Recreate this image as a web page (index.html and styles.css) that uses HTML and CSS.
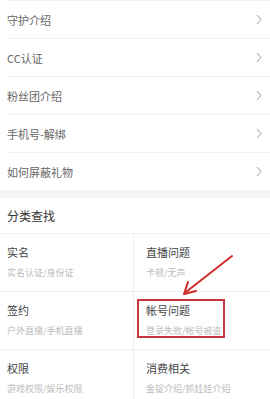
FILE: index.html
```html
<!DOCTYPE html>
<html lang="zh">
<head>
<meta charset="utf-8">
<link rel="stylesheet" href="styles.css">
</head>
<body>
<div class="page">
  <ul class="list">
    <li class="item"><span>守护介绍</span><svg class="chev" width="6" height="11" viewBox="0 0 6 11"><polyline points="1,1 5,5.5 1,10" fill="none" stroke="#9a9a9a" stroke-width="1"/></svg></li>
    <li class="item"><span>CC认证</span><svg class="chev" width="6" height="11" viewBox="0 0 6 11"><polyline points="1,1 5,5.5 1,10" fill="none" stroke="#9a9a9a" stroke-width="1"/></svg></li>
    <li class="item"><span>粉丝团介绍</span><svg class="chev" width="6" height="11" viewBox="0 0 6 11"><polyline points="1,1 5,5.5 1,10" fill="none" stroke="#9a9a9a" stroke-width="1"/></svg></li>
    <li class="item"><span>手机号-解绑</span><svg class="chev" width="6" height="11" viewBox="0 0 6 11"><polyline points="1,1 5,5.5 1,10" fill="none" stroke="#9a9a9a" stroke-width="1"/></svg></li>
    <li class="item"><span>如何屏蔽礼物</span><svg class="chev" width="6" height="11" viewBox="0 0 6 11"><polyline points="1,1 5,5.5 1,10" fill="none" stroke="#9a9a9a" stroke-width="1"/></svg></li>
  </ul>
  <div class="band"></div>
  <h2 class="heading">分类查找</h2>
  <div class="grid">
    <div class="cell left"><div class="title">实名</div><div class="sub">实名认证/身份证</div></div>
    <div class="cell right"><div class="title">直播问题</div><div class="sub">卡顿/无声</div></div>
    <div class="cell left"><div class="title">签约</div><div class="sub">户外直播/手机直播</div></div>
    <div class="cell right"><div class="title">帐号问题</div><div class="sub">登录失败/帐号被盗</div></div>
    <div class="cell left"><div class="title">权限</div><div class="sub">游戏权限/娱乐权限</div></div>
    <div class="cell right"><div class="title">消费相关</div><div class="sub">金锭介绍/抓娃娃介绍</div></div>
  </div>
  <div class="highlight"></div>
  <svg class="arrow" width="270" height="399" viewBox="0 0 270 399">
    <line x1="232" y1="256" x2="186" y2="292" stroke="#d42a2a" stroke-width="2" stroke-linecap="round"/>
    <polyline points="188,282 184,294 196,291" fill="none" stroke="#d42a2a" stroke-width="2" stroke-linecap="round" stroke-linejoin="round"/>
  </svg>
</div>
</body>
</html>
```

FILE: styles.css
```css
html, body {
  margin: 0;
  padding: 0;
  background: #fff;
}
body {
  font-family: "Noto Sans CJK SC", "Noto Sans", sans-serif;
  width: 270px;
  height: 399px;
  overflow: hidden;
}
.page {
  position: relative;
  width: 270px;
  height: 399px;
  overflow: hidden;
}
.list {
  list-style: none;
  margin: 0;
  padding: 0;
}
.item {
  height: 37px;
  margin-left: 6px;
  padding-right: 8px;
  border-top: 1px solid #f2f2f2;
  display: flex;
  align-items: center;
  justify-content: space-between;
  font-size: 11px;
  color: #666;
}
.item span {
  padding-left: 1px;
}
.chev {
  display: block;
}
.band {
  height: 8px;
  background: #f5f5f5;
}
.heading {
  margin: 0;
  height: 35px;
  line-height: 35px;
  padding-left: 7px;
  font-size: 12px;
  font-weight: normal;
  color: #333;
  border-bottom: 1px solid #f0f0f0;
}
.grid {
  display: grid;
  grid-template-columns: 133px 1fr;
}
.cell {
  height: 57px;
  border-bottom: 1px solid #f0f0f0;
  padding-top: 11px;
  box-sizing: content-box;
}
.cell.left {
  padding-left: 7px;
  height: 46px;
}
.cell.right {
  border-left: 1px solid #f0f0f0;
  padding-left: 12px;
  height: 46px;
}
.title {
  font-size: 11px;
  line-height: 14px;
  color: #444;
}
.sub {
  margin-top: 8px;
  font-size: 9px;
  line-height: 12px;
  color: #bbb;
}
.highlight {
  position: absolute;
  left: 137px;
  top: 299px;
  width: 84px;
  height: 35px;
  border: 2px solid #c9363d;
}
.arrow {
  position: absolute;
  left: 0;
  top: 0;
}
```
